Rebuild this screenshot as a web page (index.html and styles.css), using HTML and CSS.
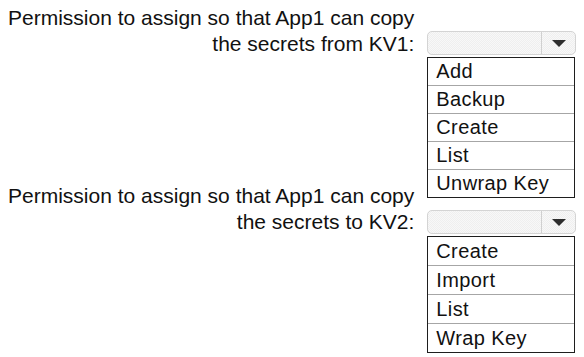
FILE: index.html
```html
<!DOCTYPE html>
<html>
    <head>
        <link rel="stylesheet" href="styles.css">
        <title>Key Vault permissions</title>
    </head>
    <body>
        <div class="question">
            <div class="prompt">Permission to assign so that App1 can copy<br>the secrets from KV1:</div>
            <div class="control">
                <div class="select">
                    <span class="value"></span>
                    <span class="arrow"></span>
                </div>
                <ul class="options">
                    <li>Add</li>
                    <li>Backup</li>
                    <li>Create</li>
                    <li>List</li>
                    <li>Unwrap Key</li>
                </ul>
            </div>
        </div>
        <div class="question second">
            <div class="prompt">Permission to assign so that App1 can copy<br>the secrets to KV2:</div>
            <div class="control">
                <div class="select">
                    <span class="value"></span>
                    <span class="arrow"></span>
                </div>
                <ul class="options">
                    <li>Create</li>
                    <li>Import</li>
                    <li>List</li>
                    <li>Wrap Key</li>
                </ul>
            </div>
        </div>
    </body>
</html>
```

FILE: styles.css
```css
body {
    font-family: "Liberation Sans", Arial, Helvetica, sans-serif;
    font-size: 21px;
    color: #111;
    background: white;
    margin: 0;
    padding: 5px 8px 0 8px;
}

.question {
    display: flex;
    gap: 13px;
}

.question.second {
    margin-top: -15px;
}

.prompt {
    width: 407px;
    text-align: right;
    line-height: 26px;
    white-space: nowrap;
}

.control {
    width: 149px;
    padding-top: 26px;
}

.second .control {
    padding-top: 27px;
}

.select {
    display: flex;
    height: 24px;
    box-sizing: border-box;
    border: 1px solid #d4d4d4;
    border-radius: 5px;
    background-color: #f4f4f4;
    background-image: repeating-conic-gradient(#efefef 0 25%, #f8f8f8 0 50%);
    background-size: 2px 2px;
}

.select .value {
    flex: 1;
}

.select .arrow {
    width: 33px;
    border-left: 1px solid #d0d0d0;
    display: flex;
    align-items: center;
    justify-content: center;
}

.select .arrow::after {
    content: "";
    border-left: 7px solid transparent;
    border-right: 7px solid transparent;
    border-top: 7px solid #2e2e2e;
}

.options {
    list-style: none;
    margin: 2px 1px 0 0;
    padding: 0;
    border: 1.5px solid #1e1e1e;
    font-size: 20px;
    letter-spacing: 0.4px;
}

.options li {
    height: 27px;
    line-height: 27px;
    padding-left: 8px;
    border-top: 1px solid #a6a6a6;
}

.second .options li {
    height: 28px;
    line-height: 28px;
}

.options li:first-child {
    border-top: none;
}
```
